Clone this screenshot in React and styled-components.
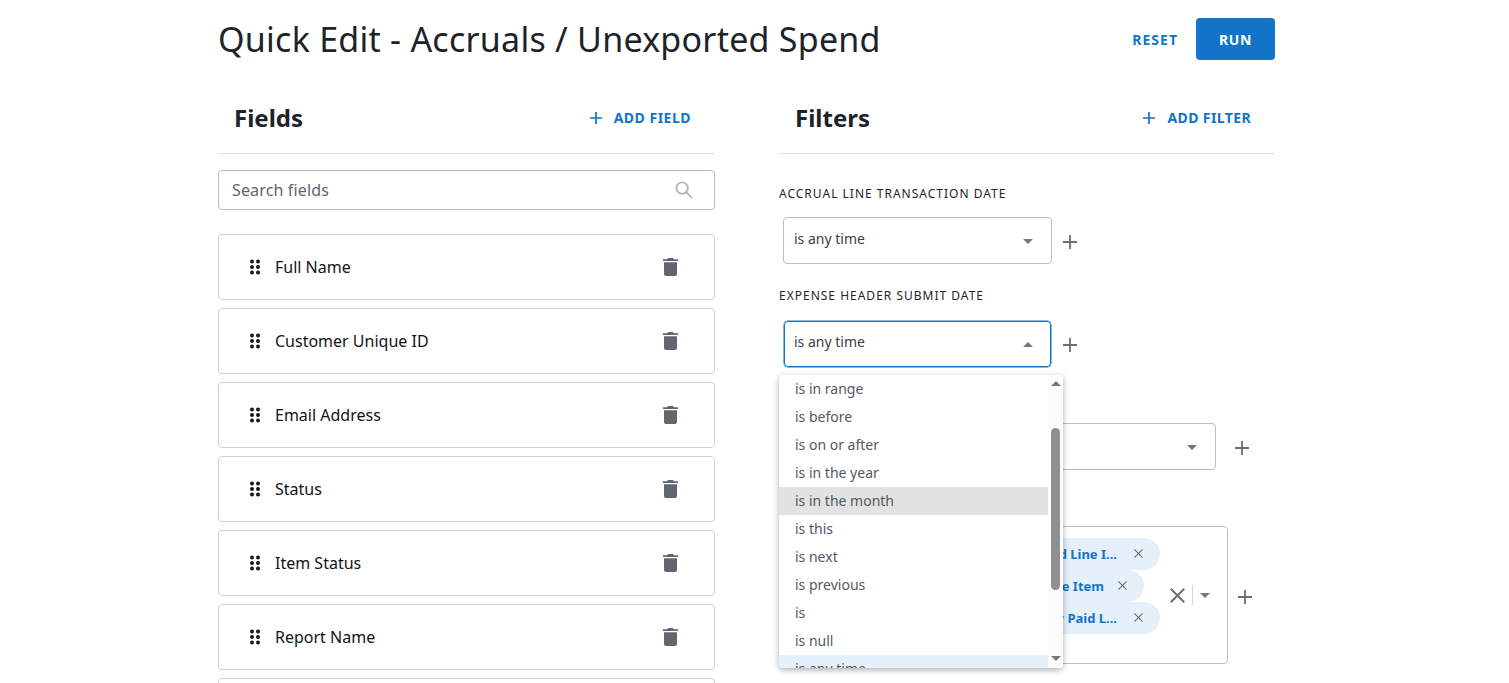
import React from "react";
import styled, { createGlobalStyle } from "styled-components";

const Global = createGlobalStyle`
  html, body { margin: 0; padding: 0; height: 683px; overflow: hidden; background: #fff; }
  body { font-family: "Noto Sans", sans-serif; color: #1c2329; }
  * { box-sizing: border-box; }
`;

const Page = styled.div`
  width: 1057px;
  height: 683px;
  margin-left: 218px;
  overflow: hidden;
`;

const TopBar = styled.header`
  display: flex;
  align-items: center;
  justify-content: space-between;
  height: 60px;
  padding-top: 18px;
  margin-bottom: 28px;
`;

const Title = styled.h1`
  margin: 0;
  font-size: 34px;
  font-weight: 400;
  line-height: 44px;
  letter-spacing: 0.25px;
  color: #1c2329;
`;

const TopActions = styled.div`
  display: flex;
  align-items: center;
  gap: 18px;
`;

const TextButton = styled.button`
  display: inline-flex;
  align-items: center;
  gap: ${(p) => p.$gap || 0}px;
  border: 0;
  background: none;
  padding: ${(p) => p.$pad || 0}px 0 0;
  font: 700 14px/20px "Noto Sans", sans-serif;
  letter-spacing: ${(p) => p.$spacing || 0.5}px;
  color: #1274c8;
`;

const RunButton = styled.button`
  width: 79px;
  height: 42px;
  border: 0;
  padding: 1px 0 0;
  border-radius: 4px;
  background: #1274c8;
  color: #fff;
  font: 700 14px/20px "Noto Sans", sans-serif;
  letter-spacing: 0.7px;
`;

const Columns = styled.div`
  display: grid;
  grid-template-columns: 497px 496px;
  column-gap: 64px;
`;

const PanelHead = styled.div`
  display: flex;
  align-items: center;
  justify-content: space-between;
  height: 66px;
  padding: 0 24px 6px 16px;
  border-bottom: 1px solid #e0e0e0;
`;

const PanelTitle = styled.h2`
  margin: 0;
  font-size: 24px;
  font-weight: 700;
  line-height: 32px;
  color: #1c2329;
`;

const Search = styled.div`
  display: flex;
  align-items: center;
  justify-content: space-between;
  height: 40px;
  margin: 16px 0 24px;
  padding: 0 21px 0 13px;
  border: 1px solid #bdbdbd;
  border-radius: 4px;
  font-size: 16px;
  letter-spacing: 0.15px;
  color: #5f6670;
`;

const FieldList = styled.div`
  display: flex;
  flex-direction: column;
  gap: 8px;
`;

const FieldCard = styled.div`
  display: flex;
  align-items: center;
  height: 66px;
  flex: none;
  padding: 0 36px 0 31px;
  border: 1px solid #cfcfcf;
  border-radius: 4px;
  font-size: 16px;
  color: #101418;
`;

const FieldName = styled.span`
  flex: 1;
  margin-left: 15px;
`;

const FilterBody = styled.div`
  position: relative;
  padding-top: 30px;
`;

const FilterLabel = styled.div`
  height: 20px;
  margin-bottom: 14px;
  font-size: 12px;
  line-height: 20px;
  letter-spacing: 1px;
  color: #1c2329;
  white-space: nowrap;
  &:first-child {
    margin-bottom: 13px;
  }
`;

const FilterRow = styled.div`
  display: flex;
  align-items: center;
  margin-left: 4px;
  margin-bottom: 22px;
`;

const Select = styled.div`
  display: flex;
  align-items: center;
  justify-content: space-between;
  flex: none;
  width: ${(p) => p.$width}px;
  height: 47px;
  padding: 0 18px 5px 10px;
  border: 1px solid #bdbdbd;
  border-radius: 4px;
  font-size: 14px;
  color: #3b4148;
`;

const FocusedSelect = styled(Select)`
  height: 46px;
  margin: 1px 0 0 1px;
  padding: 0 17px 5px 9px;
  border-color: #1274c8;
  box-shadow: 0 0 0 0.5px #1274c8;
`;

const CaretMark = styled.svg`
  flex: none;
  margin-top: ${(p) => p.$top || 0}px;
`;

const AddRow = styled.button`
  display: flex;
  border: 0;
  padding: 0;
  background: none;
  margin-left: ${(p) => p.$gap || 10}px;
  margin-top: 3px;
`;

const ChipSelect = styled.div`
  display: flex;
  align-items: flex-start;
  flex: none;
  width: ${(p) => p.$width}px;
  height: 138px;
  padding: 11px 0 0 16px;
  border: 1px solid #bdbdbd;
  border-radius: 4px;
`;

const ChipColumn = styled.div`
  display: flex;
  flex-direction: column;
  align-items: flex-start;
  flex: 1;
`;

const Chip = styled.div`
  display: flex;
  align-items: center;
  justify-content: flex-end;
  gap: ${(p) => p.$gap}px;
  width: ${(p) => p.$width}px;
  height: 32px;
  padding: 0 17px 1px 14px;
  border-radius: 16px;
  background: #e5f0fa;
  color: #1274c8;
  font-size: 13px;
  font-weight: 700;
  white-space: nowrap;
`;

const ChipControls = styled.div`
  display: flex;
  align-items: center;
  height: 20px;
  margin: 47px 17px 0 0;
  gap: 7px;
`;

const VDivider = styled.span`
  width: 1px;
  height: 20px;
  background: #d9d9d9;
`;

const Menu = styled.div`
  position: absolute;
  left: 0;
  top: 221px;
  display: flex;
  width: 284px;
  height: 293px;
  background: #fff;
  border-radius: 4px;
  overflow: hidden;
  box-shadow: 0 2px 6px rgba(0, 0, 0, 0.32);
  z-index: 2;
`;

const OptionList = styled.div`
  flex: 1;
  overflow: hidden;
`;

const Option = styled.div`
  height: 28px;
  padding-left: 16px;
  font-size: 14px;
  line-height: 28px;
  color: #53585f;
  background: ${(p) => p.$bg || "transparent"};
`;

const Rail = styled.div`
  display: flex;
  flex-direction: column;
  align-items: center;
  width: 15px;
  padding-top: 6px;
  background: #fcfcfc;
`;

const Thumb = styled.div`
  width: 9px;
  height: 162px;
  margin-top: 42px;
  border-radius: 5px;
  background: #8f8f8f;
`;

const RailArrowDown = styled.svg`
  margin-top: 66px;
`;

const Plus = ({ size = 14, color = "#6e6e6e", w = 1.8 }) => (
  <svg width={size} height={size} viewBox="0 0 14 14" fill="none" stroke={color} strokeWidth={w}>
    <path d="M7 0v14M0 7h14" />
  </svg>
);

const Caret = ({ up, top }) => (
  <CaretMark $top={top} width="10" height="5" viewBox="0 0 10 5" fill="#777">
    <path d={up ? "M0 5L5 0l5 5z" : "M0 0h10L5 5z"} />
  </CaretMark>
);

const Cross = ({ size = 10, color = "#6e6e6e", w = 1.3 }) => (
  <svg width={size} height={size} viewBox="0 0 10 10" fill="none" stroke={color} strokeWidth={w}>
    <path d="M.5.5l9 9M9.5.5l-9 9" />
  </svg>
);

const Grip = () => (
  <svg width="10" height="16" viewBox="0 0 10 16" fill="#15191d">
    {[2.5, 8, 13.5].flatMap((y) => [
      <circle key={`a${y}`} cx="2" cy={y} r="2" />,
      <circle key={`b${y}`} cx="8" cy={y} r="2" />,
    ])}
  </svg>
);

const Trash = () => (
  <svg width="15" height="18" viewBox="0 0 15 18" fill="#62656e">
    <path d="M5 0h5l1 1.200h4V3H0V1.200h4zM1 4.300h13V16a2 2 0 0 1-2 2H3a2 2 0 0 1-2-2z" />
  </svg>
);

const SearchIcon = () => (
  <svg width="18" height="18" viewBox="0 0 19 19" fill="none" stroke="#b5b5b5" strokeWidth="2">
    <circle cx="7.500" cy="7.500" r="6" />
    <path d="M11.800 11.800L18 18" />
  </svg>
);

const fields = ["Full Name", "Customer Unique ID", "Email Address", "Status", "Item Status", "Report Name", "Report ID"];
const options = ["is in range", "is before", "is on or after", "is in the year", "is in the month", "is this", "is next", "is previous", "is", "is null", "is any time"];

const optionBg = (o) => (o === "is in the month" ? "#e2e2e2" : o === "is any time" ? "#e5f0fa" : undefined);

export default function App() {
  return (
    <Page>
      <Global />
      <TopBar>
        <Title>Quick Edit - Accruals / Unexported Spend</Title>
        <TopActions>
          <TextButton $spacing={1} $pad={1}>RESET</TextButton>
          <RunButton>RUN</RunButton>
        </TopActions>
      </TopBar>
      <Columns>
        <section>
          <PanelHead>
            <PanelTitle>Fields</PanelTitle>
            <TextButton $gap={12}>
              <Plus size={12} color="#1274c8" w={2} />
              ADD FIELD
            </TextButton>
          </PanelHead>
          <Search>
            Search fields
            <SearchIcon />
          </Search>
          <FieldList>
            {fields.map((f) => (
              <FieldCard key={f}>
                <Grip />
                <FieldName>{f}</FieldName>
                <Trash />
              </FieldCard>
            ))}
          </FieldList>
        </section>
        <section>
          <PanelHead>
            <PanelTitle>Filters</PanelTitle>
            <TextButton $gap={12} $spacing={0.4}>
              <Plus size={12} color="#1274c8" w={2} />
              ADD FILTER
            </TextButton>
          </PanelHead>
          <FilterBody>
            <FilterLabel>ACCRUAL LINE TRANSACTION DATE</FilterLabel>
            <FilterRow>
              <Select $width={269}>
                is any time
                <Caret top={6} />
              </Select>
              <AddRow $gap={11}><Plus /></AddRow>
            </FilterRow>
            <FilterLabel>EXPENSE HEADER SUBMIT DATE</FilterLabel>
            <FilterRow>
              <FocusedSelect $width={267}>
                is any time
                <Caret up top={5} />
              </FocusedSelect>
              <AddRow $gap={12}><Plus /></AddRow>
            </FilterRow>
            <FilterLabel>PAYMENT DATE</FilterLabel>
            <FilterRow>
              <Select $width={433}>
                is any time
                <Caret top={6} />
              </Select>
              <AddRow $gap={19}><Plus /></AddRow>
            </FilterRow>
            <FilterLabel>ITEM TYPE</FilterLabel>
            <FilterRow>
              <ChipSelect $width={445}>
                <ChipColumn>
                  <Chip $width={360} $gap={17}>Accrued Expensed Line I...<Cross size={9} /></Chip>
                  <Chip $width={344} $gap={14}>Unexported Expense Item<Cross size={9} /></Chip>
                  <Chip $width={360} $gap={17}>Accrued Company Paid L...<Cross size={9} /></Chip>
                </ChipColumn>
                <ChipControls>
                  <Cross size={15} w={1.3} />
                  <VDivider />
                  <Caret />
                </ChipControls>
              </ChipSelect>
              <AddRow $gap={10}><Plus /></AddRow>
            </FilterRow>
            <Menu>
              <OptionList>
                {options.map((o) => (
                  <Option key={o} $bg={optionBg(o)}>{o}</Option>
                ))}
              </OptionList>
              <Rail>
                <Caret up />
                <Thumb />
                <RailArrowDown width="10" height="5" viewBox="0 0 10 5" fill="#777">
                  <path d="M0 0h10L5 5z" />
                </RailArrowDown>
              </Rail>
            </Menu>
          </FilterBody>
        </section>
      </Columns>
    </Page>
  );
}
